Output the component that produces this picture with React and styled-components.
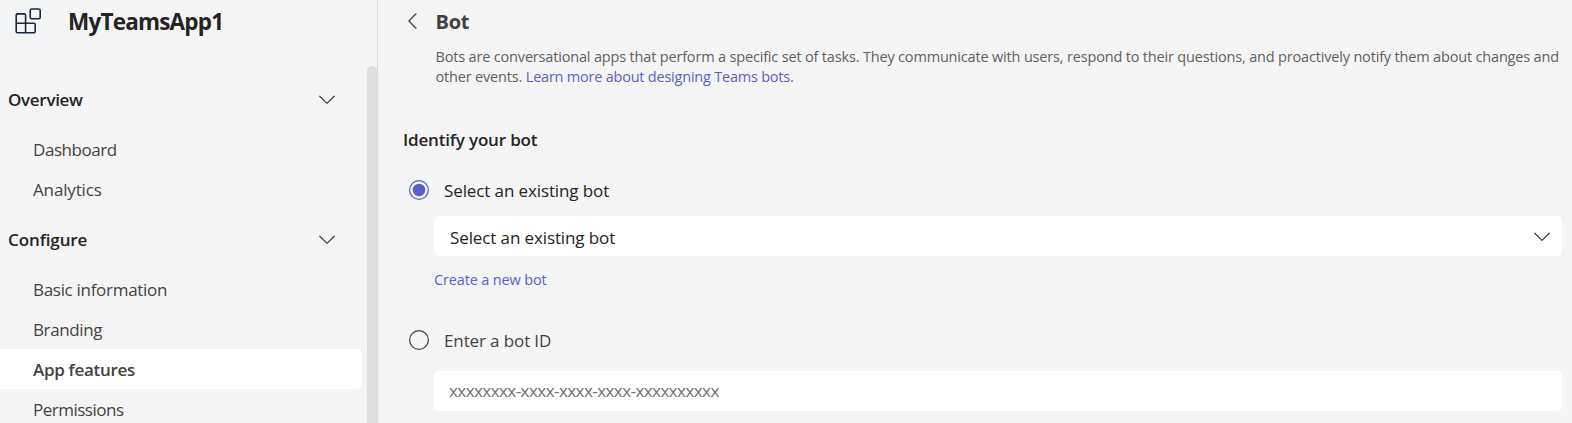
import React from "react";
import styled, { createGlobalStyle } from "styled-components";

const GlobalStyle = createGlobalStyle`
  *, *::before, *::after { box-sizing: border-box; }
  html, body { margin: 0; height: 100%; overflow: hidden; }
  body {
    background: #f5f5f5;
    color: #242424;
    font-family: "Open Sans", "Noto Sans", sans-serif;
    font-size: 17px;
  }
`;

const Page = styled.div`
  display: flex;
  height: 423px;
  overflow: hidden;
`;

const Sidebar = styled.aside`
  display: flex;
  flex-direction: column;
  flex: none;
  width: 378px;
  border-right: 1px solid #dedede;
`;

const AppHeader = styled.header`
  display: flex;
  flex: none;
  height: 66px;
  padding-left: 4px;
`;

const AppTile = styled.div`
  width: 49px;
  height: 45px;
  padding: 8px 0 0 11px;
  border-radius: 0 0 6px 6px;
  background: #f3f4f6;
`;

const AppName = styled.h1`
  margin: 0 0 0 15px;
  font-size: 22.5px;
  font-weight: 700;
  line-height: 44px;
  letter-spacing: -0.8px;
  white-space: nowrap;
`;

const NavArea = styled.div`
  display: flex;
  flex: 1;
  min-height: 0;
`;

const Nav = styled.nav`
  flex: none;
  width: 362px;
  margin-right: 5px;
  padding-top: 13px;
  overflow: hidden;
`;

const ScrollThumb = styled.div`
  flex: 1;
  border-radius: 5px 5px 0 0;
  background: #dedede;
`;

const NavGroup = styled.section`
  margin-bottom: 10px;
`;

const GroupHeader = styled.div`
  display: flex;
  align-items: center;
  justify-content: space-between;
  height: 40px;
  margin-bottom: 10px;
  padding: 0 27px 0 8px;
  font-weight: 600;
  letter-spacing: ${(p) => p.$tracking}px;

  svg {
    margin-top: 2px;
  }
`;

const NavItem = styled.div`
  height: 40px;
  padding: 1px 0 0 33px;
  border-radius: 0 5px 5px 0;
  line-height: 40px;
  color: #424242;
  background: ${(p) => (p.$active ? "#fff" : "transparent")};
  font-weight: ${(p) => (p.$active ? 600 : 400)};
  letter-spacing: ${(p) => p.$tracking}px;
`;

const Main = styled.main`
  flex: 1;
  min-width: 0;
  padding: 0 10px 0 25px;
`;

const TitleRow = styled.div`
  display: flex;
  align-items: center;
  gap: 18.5px;
  height: 43px;
  padding-left: 5px;

  svg {
    margin-bottom: 2px;
  }
`;

const Title = styled.h2`
  margin: 0;
  font-size: 20px;
  font-weight: 700;
  letter-spacing: -0.3px;
  color: #424242;
`;

const Description = styled.p`
  margin: 4px 0 0 32.5px;
  font-size: 14.5px;
  line-height: 20px;
  letter-spacing: -0.173px;
  white-space: nowrap;
  color: #616161;
`;

const Link = styled.a`
  color: #5b5fc7;
  letter-spacing: ${(p) => p.$tracking}px;
`;

const SectionTitle = styled.h3`
  margin: 41px 0 0;
  font-size: 17px;
  font-weight: 600;
  line-height: 24px;
  letter-spacing: -0.17px;
`;

const RadioRow = styled.label`
  display: flex;
  align-items: center;
  gap: 15px;
  height: 30px;
  margin-top: ${(p) => p.$top}px;
  padding-left: 6px;
  color: ${(p) => (p.$checked ? "#242424" : "#424242")};
  letter-spacing: ${(p) => p.$tracking}px;
`;

const Field = styled.div`
  display: flex;
  align-items: center;
  justify-content: space-between;
  height: 40px;
  margin: ${(p) => p.$top}px 0 0 31px;
  padding: ${(p) => (p.$placeholder ? "0 12px 2px 15px" : "2px 12px 0 16px")};
  border-radius: 5px;
  background: #fff;
  color: ${(p) => (p.$placeholder ? "#707070" : "#242424")};
  letter-spacing: ${(p) => p.$tracking}px;
`;

const CreateLink = styled.div`
  height: 20px;
  margin: 14px 0 0 31px;
  font-size: 14.5px;
  line-height: 20px;
`;

function RadioMark({ checked }) {
  const color = checked ? "#5b5fc7" : "#424242";
  return (
    <svg width="20" height="20" viewBox="0 0 20 20">
      <circle cx="10" cy="10" r="9.350" fill="none" stroke={color} strokeWidth="1.250" />
      {checked && <circle cx="10" cy="10" r="6.250" fill={color} />}
    </svg>
  );
}

function Chevron() {
  return (
    <svg width="16" height="10" viewBox="0 0 16 10" fill="none" stroke="#424242" strokeWidth="1.3" strokeLinecap="round" strokeLinejoin="round">
      <path d="M.8 1.2 8 8.4l7.2-7.2" />
    </svg>
  );
}

function BackIcon() {
  return (
    <svg width="9" height="16" viewBox="0 0 9 16" fill="none" stroke="#424242" strokeWidth="1.25" strokeLinecap="round" strokeLinejoin="round">
      <path d="M8 .8.9 8 8 15.2" />
    </svg>
  );
}

function BlocksIcon() {
  return (
    <svg width="27" height="27" viewBox="0 0 27 27" fill="none" stroke="#1b2640" strokeWidth="1.6" strokeLinejoin="round">
      <path d="M2.5 5.9h6.800a1.300 1.300 0 0 1 1.300 1.300v8h8.300a1.300 1.300 0 0 1 1.300 1.300v7a1.300 1.300 0 0 1-1.300 1.300H2.500a1.300 1.300 0 0 1-1.300-1.300V7.200a1.300 1.300 0 0 1 1.300-1.300Z" />
      <path d="M1.200 15.200h9.400v9.600" />
      <rect x="15.200" y="1" width="10" height="9.700" rx="1.500" />
    </svg>
  );
}

const groups = [
  {
    name: "Overview",
    tracking: -0.3,
    items: [
      { name: "Dashboard", tracking: -0.45 },
      { name: "Analytics", tracking: -0.15 },
    ],
  },
  {
    name: "Configure",
    tracking: -0.1,
    items: [
      { name: "Basic information", tracking: -0.3 },
      { name: "Branding", tracking: -0.37 },
      { name: "App features", tracking: -0.3, active: true },
      { name: "Permissions", tracking: -0.5 },
    ],
  },
];

export default function App() {
  return (
    <>
      <GlobalStyle />
      <Page>
        <Sidebar>
          <AppHeader>
            <AppTile>
              <BlocksIcon />
            </AppTile>
            <AppName>MyTeamsApp1</AppName>
          </AppHeader>
          <NavArea>
            <Nav>
              {groups.map((group) => (
                <NavGroup key={group.name}>
                  <GroupHeader $tracking={group.tracking}>
                    {group.name}
                    <Chevron />
                  </GroupHeader>
                  {group.items.map((item) => (
                    <NavItem key={item.name} $active={item.active} $tracking={item.tracking}>
                      {item.name}
                    </NavItem>
                  ))}
                </NavGroup>
              ))}
            </Nav>
            <ScrollThumb />
          </NavArea>
        </Sidebar>
        <Main>
          <TitleRow>
            <BackIcon />
            <Title>Bot</Title>
          </TitleRow>
          <Description>
            Bots are conversational apps that perform a specific set of tasks. They communicate with users, respond to
            their questions, and proactively notify them about changes and
            <br />
            other events. <Link $tracking={-0.22}>Learn more about designing Teams bots.</Link>
          </Description>
          <SectionTitle>Identify your bot</SectionTitle>
          <RadioRow $top={23} $checked $tracking={-0.11}>
            <RadioMark checked />
            Select an existing bot
          </RadioRow>
          <Field $top={11} $tracking={-0.11}>
            Select an existing bot
            <Chevron />
          </Field>
          <CreateLink>
            <Link $tracking={-0.15}>Create a new bot</Link>
          </CreateLink>
          <RadioRow $top={35} $tracking={-0.12}>
            <RadioMark />
            Enter a bot ID
          </RadioRow>
          <Field $top={16} $placeholder $tracking={-0.56}>
            xxxxxxxx-xxxx-xxxx-xxxx-xxxxxxxxxx
          </Field>
        </Main>
      </Page>
    </>
  );
}
